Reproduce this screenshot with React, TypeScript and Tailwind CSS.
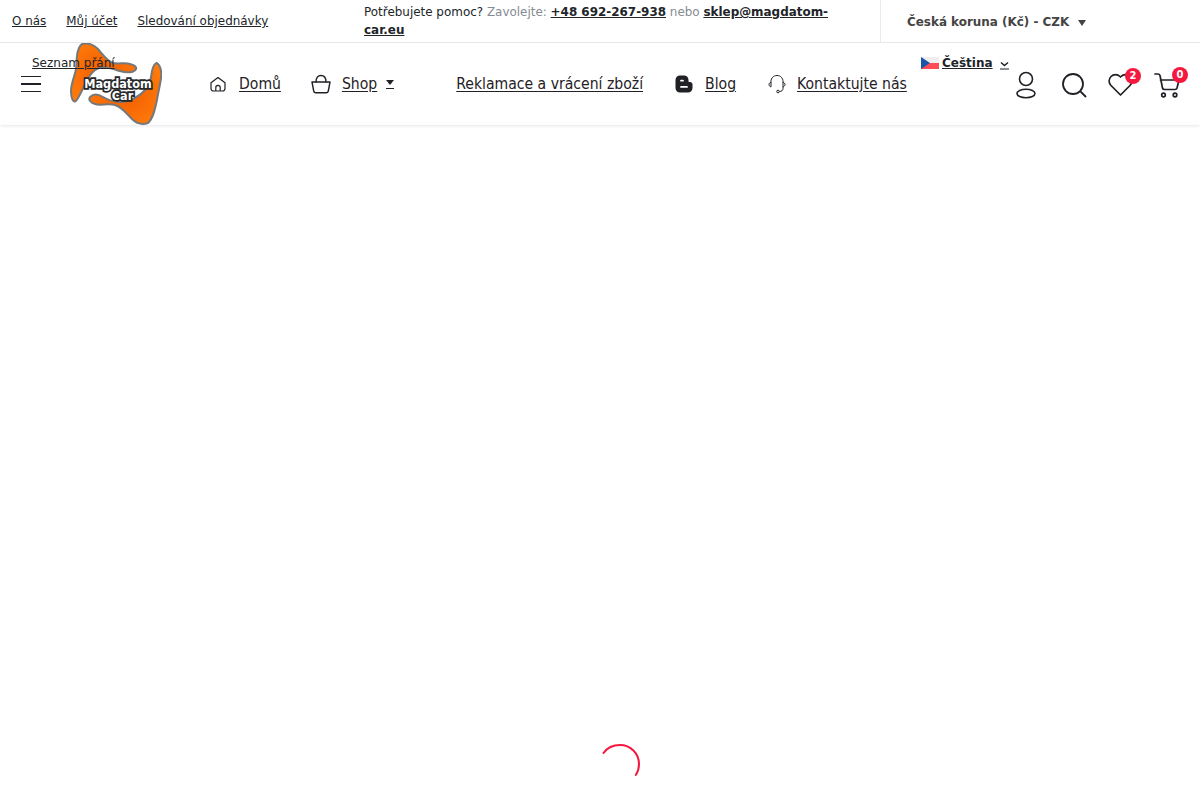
const dejavu = "font-['DejaVu_Sans',sans-serif]";

function Logo() {
    return (
        <svg width="92" height="82" viewBox="0 0 92 82" className="block">
            <defs>
                <radialGradient id="orange" cx="50%" cy="50%" r="60%">
                    <stop offset="0%" stopColor="#f25c00" />
                    <stop offset="100%" stopColor="#ff7a0a" />
                </radialGradient>
            </defs>
            <g fill="url(#orange)" stroke="#77787a" strokeWidth="2">
                <path d="M12 1C18 -0.500 24 2 28 6C33 12 37 18 43 20C49 21.500 55 19 60 21C64 22 67 24 66 26C64 30 56 30 50 28C43 26 36 23 29 25C23 27 20 32 16 39C13 45 10 53 6 58C3 60 1 55 1 48C1 40 5 33 6 26C7 17 6 6 12 1Z" />
                <path d="M87 20C90 22 92 28 91 35C90 43 88 50 87 57C85 66 83 76 78 80C72 82 66 80 62 76C57 71 52 64 45 62C38 60 30 63 25 61C21 60 18 57 20 54C23 51 28 51 33 54C38 57 44 59 51 59C60 59 70 53 76 46C81 40 81 34 82 28C83 24 85 20 87 20Z" />
            </g>
            <g fontFamily="'DejaVu Sans Condensed', 'DejaVu Sans', sans-serif" fontWeight="700" textAnchor="middle" fill="#fff" stroke="#26282b" strokeWidth="3.4" paintOrder="stroke">
                <text x="48" y="45" fontSize="12.5">Magdatom</text>
                <text x="52.500" y="57" fontSize="12.5">Car</text>
            </g>
        </svg>
    );
}

function HomeIcon() {
    return (
        <svg width="18" height="18" viewBox="0 0 18 18" fill="none" stroke="#1f2126" strokeWidth="1.2" strokeLinejoin="round">
            <path d="M2 7.800L9 2.500L16 7.800V13.500C16 15 15 16 13.500 16H4.500C3 16 2 15 2 13.500Z" />
            <path d="M6.800 16V12.500C6.800 11.300 7.800 10.300 9 10.300C10.200 10.300 11.200 11.300 11.200 12.500V16" />
        </svg>
    );
}

function BagIcon() {
    return (
        <svg width="20" height="20" viewBox="0 0 20 20" fill="none" stroke="#1f2126" strokeWidth="1.4" strokeLinejoin="round" strokeLinecap="round">
            <path d="M1 8H19L17.300 17C17.100 18 16.300 18.800 15.300 18.800H4.700C3.700 18.800 2.900 18 2.700 17Z" />
            <path d="M5 8C5 4 6.800 1.500 10 1.500C13.200 1.500 15 4 15 8" />
        </svg>
    );
}

function BlogIcon() {
    return (
        <svg width="18" height="18" viewBox="0 0 18 18" fill="#1f2126">
            <path fillRule="evenodd" d="M5 0.500H9C11.800 0.500 13.500 2.300 13.500 5V6C13.500 6.600 13.900 7 14.500 7H15C16.500 7 17.500 8 17.500 9.500V13C17.500 15.600 15.600 17.500 13 17.500H5C2.400 17.500 0.500 15.600 0.500 13V5C0.500 2.400 2.400 0.500 5 0.500ZM6 4.800C5.500 4.800 5.100 5.200 5.100 5.700C5.100 6.200 5.500 6.600 6 6.600H8C8.500 6.600 8.900 6.200 8.900 5.700C8.900 5.200 8.500 4.800 8 4.800ZM6 11C5.500 11 5.100 11.400 5.100 11.900C5.100 12.400 5.500 12.800 6 12.800H12C12.500 12.800 12.900 12.400 12.900 11.900C12.900 11.400 12.500 11 12 11Z" />
        </svg>
    );
}

function HeadsetIcon() {
    return (
        <svg width="18" height="20" viewBox="0 0 18 20" fill="none" stroke="#1f2126" strokeWidth="1">
            <path d="M3 8.500V7.500C3 4 5.500 1.500 9 1.500C12.500 1.500 15 4 15 7.500V8.500" />
            <path d="M3 8C1.800 8.500 1 9.500 1 10.500C1 11.500 1.800 12.500 3 13ZM15 8C16.200 8.500 17 9.500 17 10.500C17 11.500 16.200 12.500 15 13Z" />
            <path d="M15 13V14.500C15 16.500 13.500 17.500 11.500 17.500" />
            <circle cx="10" cy="17.500" r="1.300" />
        </svg>
    );
}

function Flag() {
    return (
        <svg width="18" height="12" viewBox="0 0 18 12" className="block">
            <rect width="18" height="6" fill="#eeeeee" />
            <rect y="6" width="18" height="6" fill="#ff4b55" />
            <path d="M0 0L9 6L0 12Z" fill="#1b55a8" />
        </svg>
    );
}

function NavLink({ icon, label, className }: { icon?: React.ReactNode; label: string; className?: string }) {
    return (
        <div className={`flex items-center ${className ?? ''}`}>
            {icon}
            <a href="#" className="text-[15.6px] leading-5 text-[#1f2126] underline underline-offset-2 whitespace-nowrap">
                {label}
            </a>
        </div>
    );
}

function Badge({ value }: { value: number }) {
    return (
        <span className={`absolute -top-[5px] -right-[8px] flex h-4 w-4 items-center justify-center rounded-full bg-[#f5193f] text-[10px] font-bold leading-none text-white ${dejavu}`}>
            {value}
        </span>
    );
}

export default function App() {
    return (
        <div className="min-h-[800px] overflow-hidden bg-white font-['DejaVu_Sans_Condensed','DejaVu_Sans',sans-serif]">
            {/* Top bar */}
            <div className={`flex h-[43px] border-b border-[#ebebeb] text-[11.95px] ${dejavu}`}>
                <div className="flex w-[364px] items-center gap-5 pl-3 pt-0.5 text-[#212529]">
                    <a href="#" className="underline">O nás</a>
                    <a href="#" className="underline">Můj účet</a>
                    <a href="#" className="underline">Sledování objednávky</a>
                </div>
                <div className="flex w-[516px] items-center">
                    <p className="w-[480px] leading-[18px] text-[#212529]">
                        Potřebujete pomoc? <span className="text-[#868b92]">Zavolejte: </span>
                        <a href="#" className="font-bold underline">+48 692-267-938</a>
                        <span className="text-[#868b92]"> nebo </span>
                        <a href="#" className="font-bold underline">sklep@magdatom-car.eu</a>
                    </p>
                </div>
                <div className="flex flex-1 items-center border-l border-[#ebebeb] pl-[26px] pt-1 font-bold text-[#444444]">
                    <span>Česká koruna (Kč) - CZK</span>
                    <span className="ml-[9px] h-0 w-0 border-x-4 border-t-[6px] border-x-transparent border-t-[#444444]" />
                </div>
            </div>

            {/* Main header */}
            <header className="relative flex h-[82px] items-center shadow-[0_1px_3px_rgba(0,0,0,0.1)]">
                <div className="flex w-[70px] pl-[21px]">
                    <div className="flex w-5 flex-col gap-[6px]">
                        <span className="h-[1.5px] bg-[#1f2126]" />
                        <span className="h-[1.5px] bg-[#1f2126]" />
                        <span className="h-[1.5px] bg-[#1f2126]" />
                    </div>
                </div>
                <Logo />
                <a href="#" className={`absolute left-8 top-3 text-xs leading-4 text-[#212529] underline ${dejavu}`}>Seznam přání</a>
                <NavLink icon={<span className="mr-[12px]"><HomeIcon /></span>} label="Domů" className="ml-[47px]" />
                <NavLink icon={<span className="mr-[11px]"><BagIcon /></span>} label="Shop" className="ml-[30px]" />
                <div className="ml-[9px] flex h-[10px] w-2 flex-col justify-between border-b border-[#1f2126] pt-[1px]">
                    <span className="h-0 w-0 border-x-4 border-t-[5px] border-x-transparent border-t-[#1f2126]" />
                </div>
                <NavLink label="Reklamace a vrácení zboží" className="ml-[62px]" />
                <NavLink icon={<span className="mr-[12px]"><BlogIcon /></span>} label="Blog" className="ml-8" />
                <NavLink icon={<span className="mr-[11px]"><HeadsetIcon /></span>} label="Kontaktujte nás" className="ml-8" />

                <div className={`absolute left-[921px] top-3 flex items-center text-xs font-bold text-[#212529] ${dejavu}`}>
                    <Flag />
                    <a href="#" className="ml-[3px] underline">Čeština</a>
                    <svg width="9" height="14" viewBox="0 0 9 14" fill="none" stroke="#1f2126" className="ml-[7px]">
                        <path d="M1 6.500L4.500 9.500L8 6.500" strokeWidth="1.500" />
                        <path d="M0 13H9" strokeWidth="1" />
                    </svg>
                </div>

                <div className="ml-auto flex items-center gap-[21px] pr-5 pt-[2px]">
                    <svg width="26" height="28" viewBox="0 0 26 28" fill="none" stroke="#1f2126" strokeWidth="1.6">
                        <circle cx="12" cy="8" r="6.500" />
                        <ellipse cx="12" cy="22.500" rx="9" ry="4.200" />
                    </svg>
                    <svg width="26" height="26" viewBox="0 0 26 26" fill="none" stroke="#1f2126" strokeWidth="1.8" strokeLinecap="round">
                        <circle cx="12" cy="12" r="10" />
                        <path d="M20 20L24.500 24.500" />
                    </svg>
                    <div className="relative">
                        <svg width="25" height="24" viewBox="0 0 25 24" fill="none" stroke="#1f2126" strokeWidth="1.7" strokeLinejoin="round">
                            <path d="M12.500 22L3 12.500C0.500 10 0.500 6 3 3.500C5.500 1 9.500 1 12 3.500L12.500 4L13 3.500C15.500 1 19.500 1 22 3.500C24.500 6 24.500 10 22 12.500Z" />
                        </svg>
                        <Badge value={2} />
                    </div>
                    <div className="relative">
                        <svg width="26" height="26" viewBox="0 0 26 26" fill="none" stroke="#1f2126" strokeWidth="1.7" strokeLinecap="round" strokeLinejoin="round">
                            <path d="M1 2H4C5 2 5.700 2.600 6 3.500L8.500 16C8.700 17 9.400 17.500 10.500 17.500H21C22 17.500 22.700 17 23 16L25 8H6.500" />
                            <circle cx="9.500" cy="23" r="1.800" />
                            <circle cx="21" cy="23" r="1.800" />
                        </svg>
                        <Badge value={0} />
                    </div>
                </div>
            </header>

            {/* Loader */}
            <main className="flex justify-center pl-10 pt-[619px]">
                <svg width="40" height="40" viewBox="0 0 40 40" fill="none" stroke="#f5193f" strokeWidth="2" strokeLinecap="round">
                    <path d="M3.500 9C7 4 13 1 20 1C30.500 1 39 9.500 39 20C39 24 37.800 28 35.800 31" />
                </svg>
            </main>
        </div>
    );
}
